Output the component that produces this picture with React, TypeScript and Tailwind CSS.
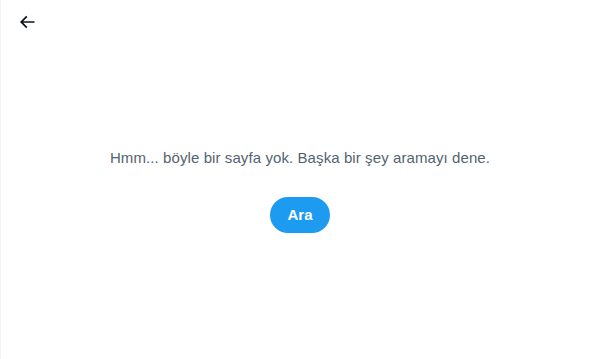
import React from 'react'

const BackArrow = () => (
    <svg viewBox="0 0 24 24" className="w-5 h-5 fill-[#0f1419]">
        <path d="M7.414 13l5.043 5.04-1.414 1.42L3.586 12l7.457-7.46 1.414 1.42L7.414 11H21v2H7.414z" />
    </svg>
)

const App = () => {
    return (
        <div className="h-[359px] w-[599px] bg-white border-l border-[#eff3f4] flex flex-col font-['Liberation_Sans',sans-serif]">
            <div className="h-[39px] flex items-end pl-[9px]">
                <button className="w-[34px] h-[34px] rounded-full flex items-center justify-center">
                    <BackArrow />
                </button>
            </div>
            <div className="flex flex-col items-center pt-[109px]">
                <p className="text-[15px] leading-5 tracking-[0.09px] text-[#536471]">
                    Hmm... böyle bir sayfa yok. Başka bir şey aramayı dene.
                </p>
                <button className="mt-[29px] h-9 px-[17px] rounded-full bg-[#1d9bf0] text-white text-[15px] font-bold leading-5">
                    Ara
                </button>
            </div>
        </div>
    )
}

export default App
